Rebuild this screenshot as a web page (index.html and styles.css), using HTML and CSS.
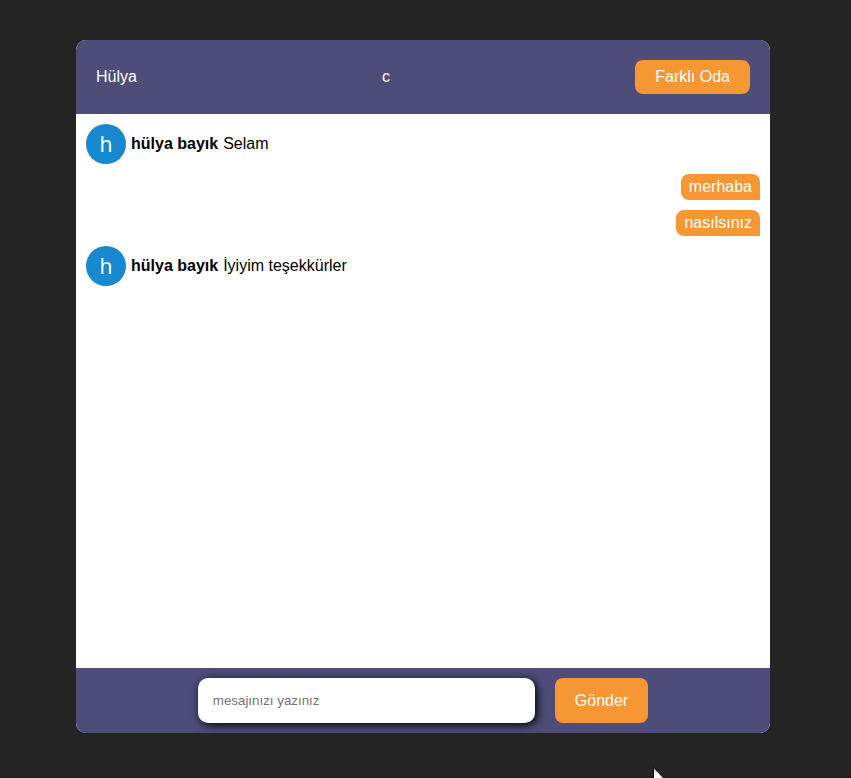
FILE: index.html
```html
<!DOCTYPE html>
<html lang="tr">
<head>
<meta charset="utf-8">
<title>Chat</title>
<link rel="stylesheet" href="styles.css">
</head>
<body>
<main class="chat">
  <header class="chat-header">
    <p>Hülya</p>
    <p>c</p>
    <button class="room-button">Farklı Oda</button>
  </header>
  <section class="messages">
    <div class="message">
      <span class="avatar">h</span>
      <strong>hülya bayık</strong>
      <span>Selam</span>
    </div>
    <p class="own-message">merhaba</p>
    <p class="own-message">nasılsınız</p>
    <div class="message">
      <span class="avatar">h</span>
      <strong>hülya bayık</strong>
      <span>İyiyim teşekkürler</span>
    </div>
  </section>
  <form class="composer">
    <input type="text" placeholder="mesajınızı yazınız">
    <button class="send-button" type="button">Gönder</button>
  </form>
</main>
<svg class="cursor" width="12" height="19" viewBox="0 0 12 19"><path d="M.5 .5V17L4.5 13L7 18.5L9.5 17.5L7 12H11.5Z" fill="#fff" stroke="#050510"/></svg>
</body>
</html>
```
FILE: styles.css
```css
* {
  box-sizing: border-box;
  margin: 0;
  padding: 0;
}

body {
  height: 778px;
  overflow: hidden;
  padding: 40px 81px 45px 76px;
  background: #242424;
  border-bottom: 1px solid #1c1718;
  font-family: "Liberation Sans", Arial, sans-serif;
  font-size: 16px;
  line-height: 18px;
}

.chat {
  display: grid;
  grid-template-rows: 74px 1fr 65px;
  height: 693px;
  background: #fff;
  border-radius: 10px;
  overflow: hidden;
}

.chat-header {
  display: flex;
  justify-content: space-between;
  align-items: center;
  padding: 20px;
  background: #4e4c79;
  color: #fff;
}

button {
  border: 0;
  border-radius: 8px;
  background: #f79734;
  color: #fff;
  font: inherit;
}

.room-button {
  height: 34px;
  padding: 0 20px;
}

.messages {
  display: flex;
  flex-direction: column;
  gap: 10px;
  padding: 10px;
}

.message {
  display: flex;
  align-items: center;
  gap: 5px;
  color: #000;
}

.avatar {
  display: grid;
  place-items: center;
  width: 40px;
  height: 40px;
  border-radius: 50%;
  background: #1888d0;
  color: #fff;
  font-family: "Noto Sans", sans-serif;
  font-size: 21px;
}

.own-message {
  align-self: flex-end;
  padding: 4px 8px;
  border-radius: 8px 8px 0 8px;
  background: #f79734;
  color: #fff;
}

.composer {
  display: flex;
  justify-content: center;
  gap: 20px;
  padding: 10px;
  background: #4e4c79;
}

input {
  width: 337px;
  padding: 0 15px;
  border: 0;
  border-radius: 10px;
  background: #fff;
  box-shadow: 2px 2px 8px #000;
  font-family: "Liberation Sans", Arial, sans-serif;
  font-size: 13.333px;
}

input::placeholder {
  color: #757575;
}

.send-button {
  padding: 0 20px;
}

.cursor {
  position: absolute;
  left: 653px;
  top: 767px;
  clip-path: inset(0 0 8px 0);
}
```
